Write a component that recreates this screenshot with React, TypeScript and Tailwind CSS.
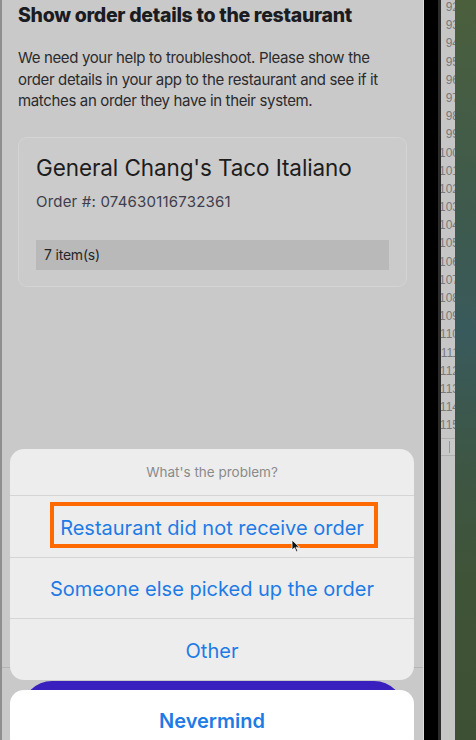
import React from "react";

const lineNums = Array.from({ length: 25 }, (_, i) => 92 + i);

export default function App() {
  return (
    <div className="w-[476px] h-[740px] flex overflow-hidden bg-[#3f5438]" style={{ fontFamily: "Inter, 'Noto Sans', sans-serif" }}>
      {/* phone screen */}
      <div className="relative w-[423px] h-full bg-[#c9c9c9] border-l-2 border-[#8e8e8e] shrink-0 overflow-hidden">
        <div className="pl-[16px] pr-[16px]">
          <h1 className="pt-[3px] text-[19.5px] leading-[24px] font-extrabold text-[#1b1b22] tracking-[-0.3px]">
            Show order details to the restaurant
          </h1>
          <p className="mt-[20px] text-[15px] leading-[21.5px] text-[#2b2b2e] tracking-[-0.35px]">
            We need your help to troubleshoot. Please show the
            <br />
            order details in your app to the restaurant and see if it
            <br />
            matches an order they have in their system.
          </p>
          <div className="mt-[25px] w-[389px] h-[150px] rounded-[9px] border border-[#d4d4d4] bg-[#cbcbcb] px-[17px] pt-[16px]">
            <div className="text-[22.5px] leading-[28px] text-[#1d1d20] tracking-[-0.1px]">General Chang's Taco Italiano</div>
            <div className="mt-[10px] text-[15px] leading-[20px] text-[#3e3e4c] tracking-[0.2px]">Order #: 074630116732361</div>
            <div className="mt-[28px] h-[30px] bg-[#b9b9b9] flex items-center pl-[8px] text-[14px] text-[#262626] tracking-[-0.2px]">
              7 item(s)
            </div>
          </div>
        </div>

        {/* background separator line */}
        <div className="absolute left-0 right-0 top-[667px] h-px bg-[#b5b5b5]" />
        {/* dimmed purple button behind */}
        <div className="absolute left-[20px] right-[19px] top-[681px] h-[60px] rounded-[30px] bg-[#3a1fbf]" />

        {/* action sheet overlay */}
        <div className="absolute left-[8px] right-[9px] top-[449px] flex flex-col gap-[10px]">
          <div className="rounded-[14px] bg-[#ededed] flex flex-col">
            <div className="h-[47px] flex items-center justify-center text-[13.5px] text-[#8a8a8a] border-b border-[#d5d5d5]">
              What's the problem?
            </div>
            <div className="relative h-[62px] flex items-center justify-center pt-[2px] text-[20px] text-[#1e7be6] border-b border-[#d5d5d5]">
              Restaurant did not receive order
              <div className="absolute left-[40px] top-[6px] w-[328px] h-[46px] border-[4px] border-[#ff6a00]" />
              <svg className="absolute left-[281px] top-[43px]" width="10" height="14" viewBox="0 0 10 14">
                <path d="M1 1 L1 11 L3.5 8.8 L5.5 13 L7 12.3 L5 8.2 L8.5 8.2 Z" fill="#111" stroke="#fff" strokeWidth="0.8" />
              </svg>
            </div>
            <div className="h-[61px] flex items-center justify-center pt-[2px] text-[20px] text-[#1e7be6] border-b border-[#d5d5d5]">
              Someone else picked up the order
            </div>
            <div className="h-[61px] flex items-center justify-center pt-[2px] text-[20px] text-[#1e7be6]">
              Other
            </div>
          </div>
          <div className="h-[62px] rounded-[14px] bg-white flex items-center justify-center text-[20px] font-semibold text-[#1e7be6]">
            Nevermind
          </div>
        </div>
      </div>

      {/* phone edge */}
      <div className="w-px h-full bg-[#dedede] shrink-0" />
      <div className="relative w-[17px] h-full bg-black shrink-0">
        <div className="absolute right-0 top-0 bottom-0 w-[3px] bg-[#2c2c2c]" />
        <div className="absolute right-[-2px] top-[135px] h-[105px] w-[4px] bg-[#2a2a2a]" />
      </div>

      {/* editor gutter */}
      <div className="relative w-[14px] h-full bg-[#c6c6c6] overflow-hidden shrink-0" style={{ fontFamily: "'Liberation Sans', sans-serif" }}>
        <div className="absolute right-[-4px] top-[-2px] flex flex-col items-end">
          {lineNums.map((n) => (
            <div key={n} className="h-[18.2px] leading-[18.2px] text-[12px] text-[#7a7a7a]">
              {n}
            </div>
          ))}
        </div>
        <div className="absolute left-0 right-0 top-[438px] h-[18px] border-t border-b border-[#b0b0b0] bg-[#c9c9c9] flex items-center pl-[8px]">
          <span className="w-px h-[12px] bg-[#999]" />
        </div>
      </div>

      {/* desktop background */}
      <div className="flex-1 h-full bg-[linear-gradient(180deg,#4b5f3c_0%,#3e5a4e_30%,#395a5c_45%,#3d5645_62%,#3f5336_80%,#3e5034_100%)]" />
    </div>
  );
}
